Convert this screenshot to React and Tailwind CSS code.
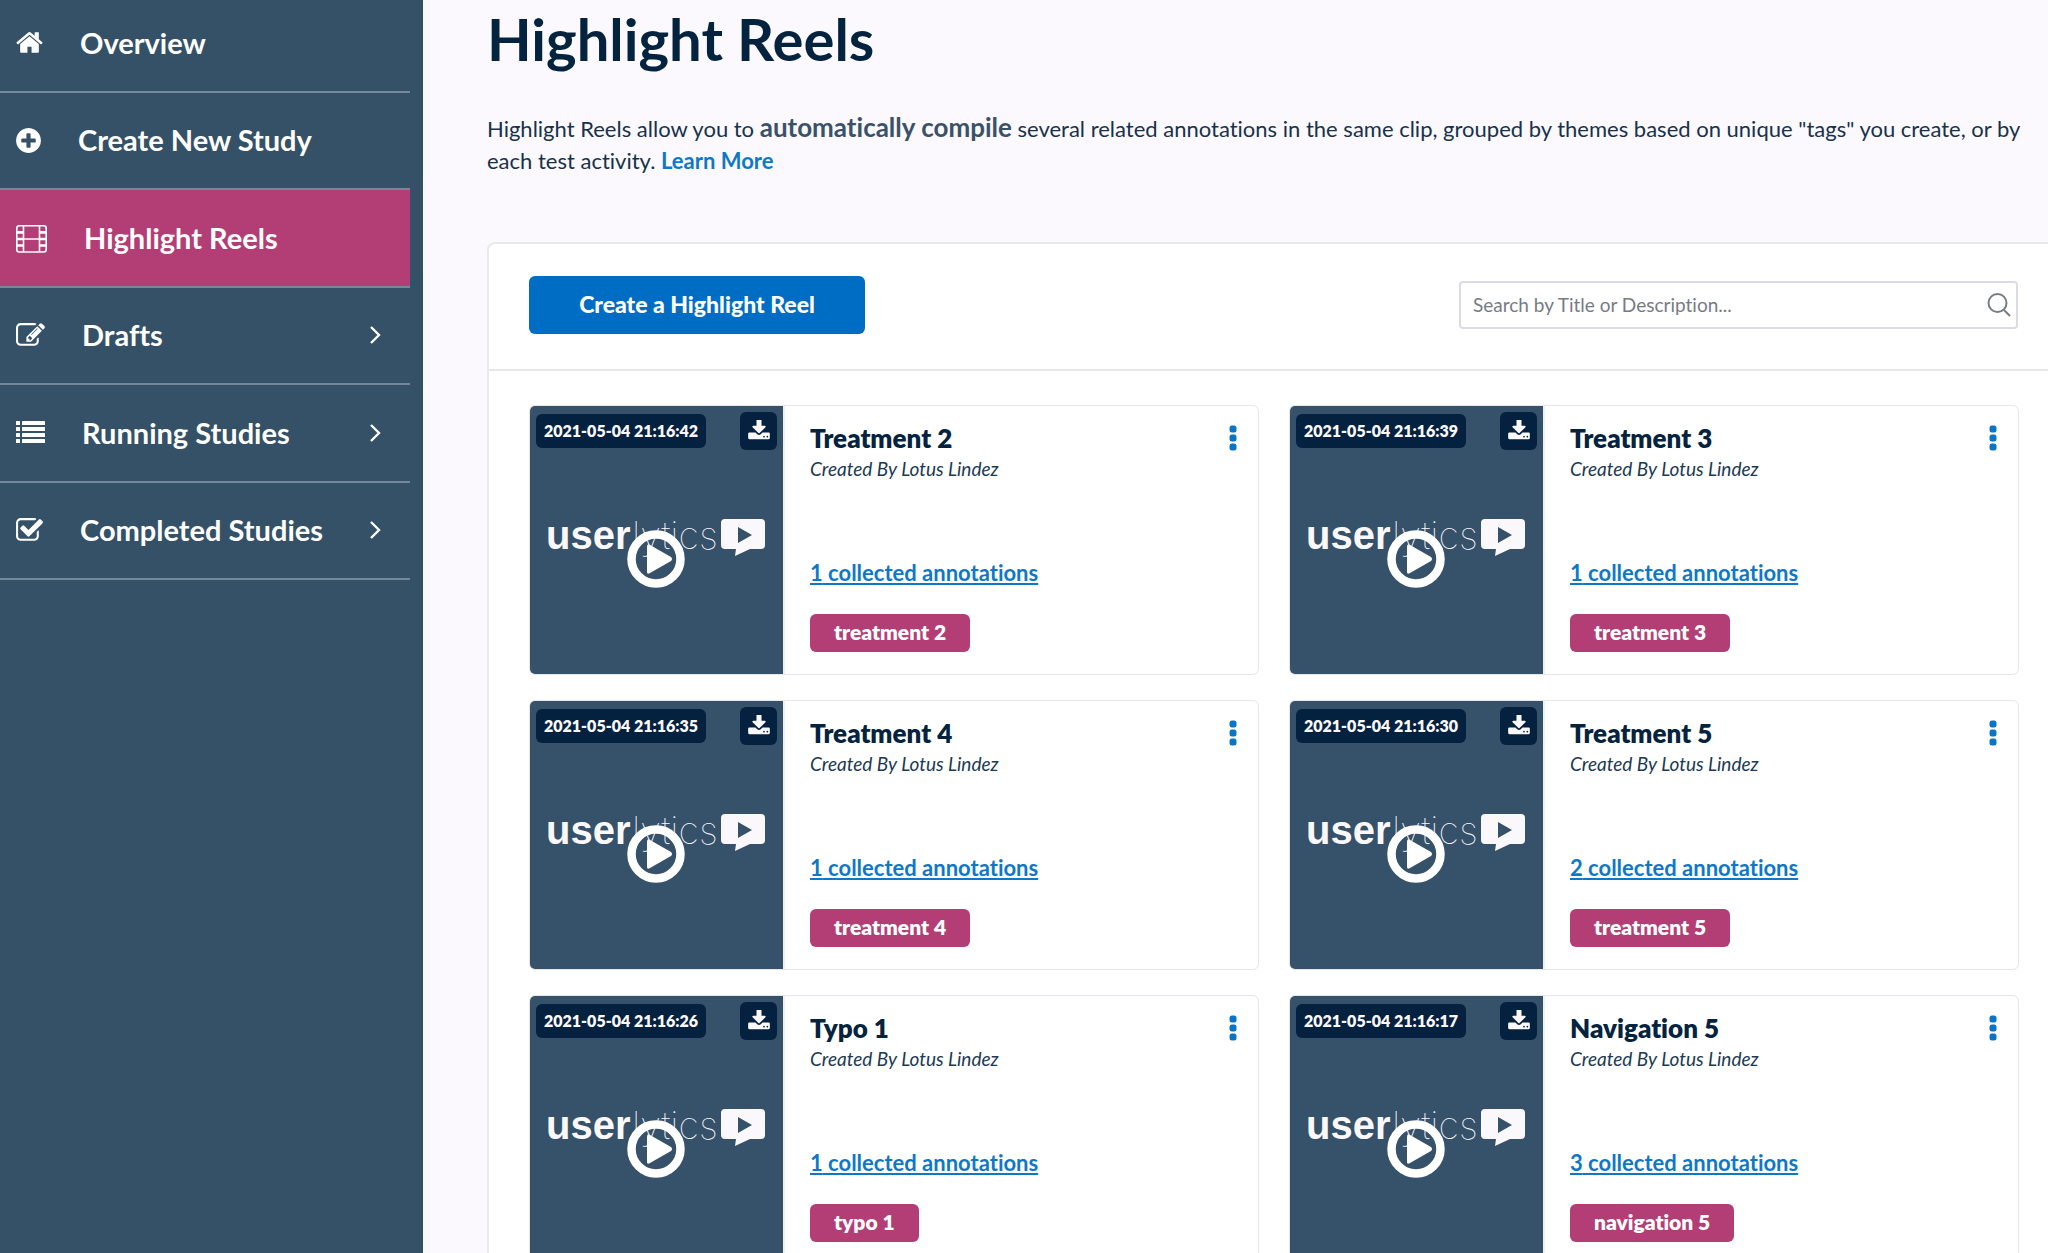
import { useState } from "react";

const navItems = [
  { label: "Overview", icon: HomeIcon },
  { label: "Create New Study", icon: PlusIcon },
  { label: "Highlight Reels", icon: FilmIcon, active: true },
  { label: "Drafts", icon: EditIcon, expandable: true },
  { label: "Running Studies", icon: ListIcon, expandable: true },
  { label: "Completed Studies", icon: CheckIcon, expandable: true },
];

const reels = [
  { title: "Treatment 2", date: "2021-05-04 21:16:42", count: 1, tag: "treatment 2" },
  { title: "Treatment 3", date: "2021-05-04 21:16:39", count: 1, tag: "treatment 3" },
  { title: "Treatment 4", date: "2021-05-04 21:16:35", count: 1, tag: "treatment 4" },
  { title: "Treatment 5", date: "2021-05-04 21:16:30", count: 2, tag: "treatment 5" },
  { title: "Typo 1", date: "2021-05-04 21:16:26", count: 1, tag: "typo 1" },
  { title: "Navigation 5", date: "2021-05-04 21:16:17", count: 3, tag: "navigation 5" },
];

function HomeIcon() {
  return (
    <svg viewBox="64 0 1664 1792" className="h-[29px] w-[27px]" fill="currentColor" aria-hidden="true">
      <path d="M1472 992v480q0 26-19 45t-45 19h-384v-384h-256v384h-384q-26 0-45-19t-19-45v-480q0-1 .5-3t.5-3l575-474 575 474q1 2 1 6zm223-69l-62 74q-8 9-21 11h-3q-13 0-21-7l-692-577-692 577q-12 8-24 7-13-2-21-11l-62-74q-8-10-7-23.5t11-21.5l719-599q32-26 76-26t76 26l244 204v-195q0-14 9-23t23-9h192q14 0 23 9t9 23v408l219 182q10 8 11 21.5t-7 23.5z" />
    </svg>
  );
}

function PlusIcon() {
  return (
    <svg viewBox="128 0 1536 1792" className="h-[29px] w-[25px]" fill="currentColor" aria-hidden="true">
      <path d="M1344 960v-128q0-26-19-45t-45-19h-256v-256q0-26-19-45t-45-19h-128q-26 0-45 19t-19 45v256h-256q-26 0-45 19t-19 45v128q0 26 19 45t45 19h256v256q0 26 19 45t45 19h128q26 0 45-19t19-45v-256h256q26 0 45-19t19-45zm320-64q0 209-103 385.5t-279.5 279.5-385.5 103-385.5-103-279.5-279.5-103-385.5 103-385.5 279.5-279.5 385.5-103 385.5 103 279.5 279.5 103 385.5z" />
    </svg>
  );
}

function FilmIcon() {
  return (
    <svg
      viewBox="0 0 31 31"
      className="h-[31px] w-[31px]"
      fill="none"
      stroke="currentColor"
      strokeWidth="1.6"
      aria-hidden="true"
    >
      <rect x="0.8" y="3.8" width="29.4" height="26.2" rx="2.4" />
      <path d="M7.5 4v26M23.5 4v26M7.5 17h16" />
      <path d="M1 10.4h6.5M1 17h6.5M1 23.5h6.5M23.5 10.4h6.5M23.5 17h6.5M23.5 23.5h6.5" strokeWidth="2.6" />
    </svg>
  );
}

function EditIcon() {
  return (
    <svg viewBox="0 0 1792 1792" className="h-[29px] w-[29px]" fill="currentColor" aria-hidden="true">
      <path d="M888 1184l116-116-152-152-116 116v56h96v96h56zm440-720q-16-16-33 1l-350 350q-17 17-1 33t33-1l350-350q17-17 1-33zm80 594v190q0 119-84.5 203.5t-203.5 84.5h-832q-119 0-203.5-84.5t-84.5-203.5v-832q0-119 84.5-203.5t203.5-84.5h832q63 0 117 25 15 7 18 23 3 17-9 29l-49 49q-14 14-32 8-23-6-45-6h-832q-66 0-113 47t-47 113v832q0 66 47 113t113 47h832q66 0 113-47t47-113v-126q0-13 9-22l64-64q15-15 35-7t20 29zm-96-738l288 288-672 672h-288v-288zm444 132l-92 92-288-288 92-92q28-28 68-28t68 28l152 152q28 28 28 68t-28 68z" />
    </svg>
  );
}

function ListIcon() {
  return (
    <svg viewBox="0 0 29 29" className="h-[29px] w-[29px]" fill="currentColor" aria-hidden="true">
      {[3, 9, 15, 21].map((y) => (
        <g key={y}>
          <rect x="0" y={y} width="4" height="4" rx="0.5" />
          <rect x="6" y={y} width="23" height="4" rx="0.5" />
        </g>
      ))}
    </svg>
  );
}

function CheckIcon() {
  return (
    <svg viewBox="0 0 1664 1792" className="h-[29px] w-[27px]" fill="currentColor" aria-hidden="true">
      <path d="M1408 930v318q0 119-84.5 203.5t-203.5 84.5h-832q-119 0-203.5-84.5t-84.5-203.5v-832q0-119 84.5-203.5t203.5-84.5h832q63 0 117 25 15 7 18 23 3 17-9 29l-49 49q-10 10-23 10-3 0-9-2-23-6-45-6h-832q-66 0-113 47t-47 113v832q0 66 47 113t113 47h832q66 0 113-47t47-113v-254q0-13 9-22l64-64q10-10 23-10 6 0 12 3 20 8 20 29zm231-489l-814 814q-24 24-57 24t-57-24l-430-430q-24-24-24-57t24-57l110-110q24-24 57-24t57 24l263 263 647-647q24-24 57-24t57 24l110 110q24 24 24 57t-24 57z" />
    </svg>
  );
}

function DownloadIcon() {
  return (
    <svg viewBox="64 64 1664 1536" className="mb-0.5 h-[20px] w-[22px]" fill="currentColor" aria-hidden="true">
      <path d="M1344 1344q0-26-19-45t-45-19-45 19-19 45 19 45 45 19 45-19 19-45zm256 0q0-26-19-45t-45-19-45 19-19 45 19 45 45 19 45-19 19-45zm128-224v320q0 40-28 68t-68 28h-1472q-40 0-68-28t-28-68v-320q0-40 28-68t68-28h465l135 136q58 56 136 56t136-56l136-136h464q40 0 68 28t28 68zm-325-569q17 41-14 70l-448 448q-18 19-45 19t-45-19l-448-448q-31-29-14-70 17-39 59-39h256v-448q0-26 19-45t45-19h256q26 0 45 19t19 45v448h256q42 0 59 39z" />
    </svg>
  );
}

function Sidebar() {
  return (
    <aside className="w-[423px] shrink-0 bg-[#345168] pr-[13px] text-white">
      <nav className="-mt-[5px]">
        <ul className="grid h-[585px] auto-rows-fr">
          {navItems.map(({ label, icon: Icon, active, expandable }) => (
            <li key={label} className="border-b-2 border-[#74889a]">
              <a
                href="#"
                className={
                  active
                    ? "flex h-full items-center gap-[37px] bg-[#b33e75] pl-4 pr-[29px]"
                    : "flex h-full items-center gap-[37px] pl-4 pr-[29px]"
                }
              >
                <Icon />
                <span className="text-[29px] font-bold leading-9">{label}</span>
                {expandable && (
                  <svg
                    viewBox="0 0 12 20"
                    className="ml-auto h-5 w-3"
                    fill="none"
                    stroke="currentColor"
                    strokeWidth="2.4"
                    aria-hidden="true"
                  >
                    <path d="M2 2l8 8-8 8" />
                  </svg>
                )}
              </a>
            </li>
          ))}
        </ul>
      </nav>
    </aside>
  );
}

function Logo() {
  return (
    <svg viewBox="0 0 253 60" className="mt-[60px] h-[60px] w-[253px]" fill="#fbf8fc" aria-label="userlytics">
      <text x="16" y="39" className="font-['Liberation_Sans',sans-serif] text-[40px] font-bold">
        user
      </text>
      <text x="102" y="39" className="font-[Inter,sans-serif] text-[38px] font-thin">
        lytics
      </text>
      <path
        fillRule="evenodd"
        d="M195 9h36a4 4 0 0 1 4 4v22a4 4 0 0 1-4 4h-11l-15 7 1-7h-11a4 4 0 0 1-4-4v-22a4 4 0 0 1 4-4zM208 17v16l14-8z"
      />
    </svg>
  );
}

function ReelCard({ reel }) {
  return (
    <article className="flex h-[270px] overflow-hidden rounded-md border border-[#e6e5ec] bg-white">
      <div className="relative w-[253px] shrink-0 bg-[#36516a] text-[#fbf8fc]">
        <div className="flex items-center justify-between px-[6px] pt-[6px]">
          <span className="rounded-md bg-[#04213f] px-2 text-base font-extrabold leading-[34px]">
            {reel.date}
          </span>
          <button
            type="button"
            aria-label="Download"
            className="flex h-[38px] w-[37px] items-center justify-center rounded-md bg-[#04213f]"
          >
            <DownloadIcon />
          </button>
        </div>
        <Logo />
        <button type="button" aria-label={`Play ${reel.title}`} className="absolute left-[97px] top-[124px]">
          <svg viewBox="0 0 58 58" className="h-[58px] w-[58px]" aria-hidden="true">
            <circle cx="29" cy="29" r="24.5" fill="none" stroke="white" strokeWidth="8.5" />
            <path d="M20 17v25q0 3 3 1l21-12q2-2 0-4l-21-12q-3-2-3 2z" fill="white" />
          </svg>
        </button>
      </div>

      <div className="flex min-w-0 grow flex-col items-start border-l-2 border-[#f0eff4] pb-[22px] pl-[25px] pr-[21px] pt-4">
        <div className="flex w-full items-center justify-between">
          <h2 className="text-[26px] font-extrabold leading-8 text-[#04233f]">{reel.title}</h2>
          <button type="button" aria-label="More options" className="text-[#0a74c6]">
            <svg viewBox="0 0 8 26" className="h-[26px] w-2" fill="currentColor" aria-hidden="true">
              <rect x="0.5" y="0.5" width="7" height="7" rx="2.5" />
              <rect x="0.5" y="9.5" width="7" height="7" rx="2.5" />
              <rect x="0.5" y="18.5" width="7" height="7" rx="2.5" />
            </svg>
          </button>
        </div>
        <p className="mt-[3px] text-[19px] italic leading-6 text-[#1b3a55]">Created By Lotus Lindez</p>
        <a
          href="#"
          className="mt-auto text-[22px] font-bold leading-7 text-[#0f78c6] underline decoration-2 underline-offset-2"
        >
          {reel.count} collected annotations
        </a>
        <span className="mt-[27px] rounded-md bg-[#b33e75] px-6 pb-0.5 text-[21px] font-extrabold leading-9 text-white">
          {reel.tag}
        </span>
      </div>
    </article>
  );
}

export default function App() {
  const [query, setQuery] = useState("");

  const visible = reels.filter((r) => r.title.toLowerCase().includes(query.toLowerCase()));

  return (
    <div className="flex min-h-screen bg-[#fbf9fd] font-[Lato,sans-serif] [font-variant-ligatures:none]">
      <Sidebar />

      <main className="min-w-0 grow pl-16 pt-1">
        <h1 className="text-[58px] font-bold leading-[70px] text-[#04233f]">Highlight Reels</h1>
        <p className="mt-[39px] pr-4 text-[22px] leading-8 text-[#17324c]">
          Highlight Reels allow you to{" "}
          <strong className="text-[26px] font-bold leading-none text-[#3a5269]">automatically compile</strong>{" "}
          several related annotations in the same clip, grouped by themes based on unique "tags" you
          create, or by each test activity.{" "}
          <a href="#" className="font-bold text-[#0f78c6]">
            Learn More
          </a>
        </p>

        {/* Reels panel */}
        <section className="mt-[65px] rounded-tl-lg border-l-2 border-t-2 border-[#e8e8ed] bg-white">
          <div className="flex items-center justify-between border-b-2 border-[#e5e5ea] pb-[35px] pl-10 pr-[30px] pt-8">
            <button
              type="button"
              className="h-[58px] w-[336px] rounded-md bg-[#006dc5] pb-0.5 text-[23px] font-black text-white"
            >
              Create a Highlight Reel
            </button>
            <label className="flex h-12 w-[559px] items-center rounded-sm border-2 border-[#dcdbe5] pl-3 pr-[5px]">
              <input
                type="text"
                aria-label="Search"
                value={query}
                onChange={(e) => setQuery(e.target.value)}
                placeholder="Search by Title or Description..."
                className="min-w-0 grow text-[19px] text-[#17324c] outline-none placeholder:text-[#777b86]"
              />
              <svg
                viewBox="0 0 24 24"
                className="h-6 w-6"
                fill="none"
                stroke="#777b86"
                strokeWidth="2"
                aria-hidden="true"
              >
                <circle cx="10.5" cy="10" r="9" />
                <path d="M17 17l6 6" />
              </svg>
            </label>
          </div>

          <div className="grid grid-cols-2 gap-x-[30px] gap-y-[25px] pb-8 pl-10 pr-[29px] pt-[34px]">
            {visible.map((reel) => (
              <ReelCard key={reel.title} reel={reel} />
            ))}
          </div>
        </section>
      </main>
    </div>
  );
}
